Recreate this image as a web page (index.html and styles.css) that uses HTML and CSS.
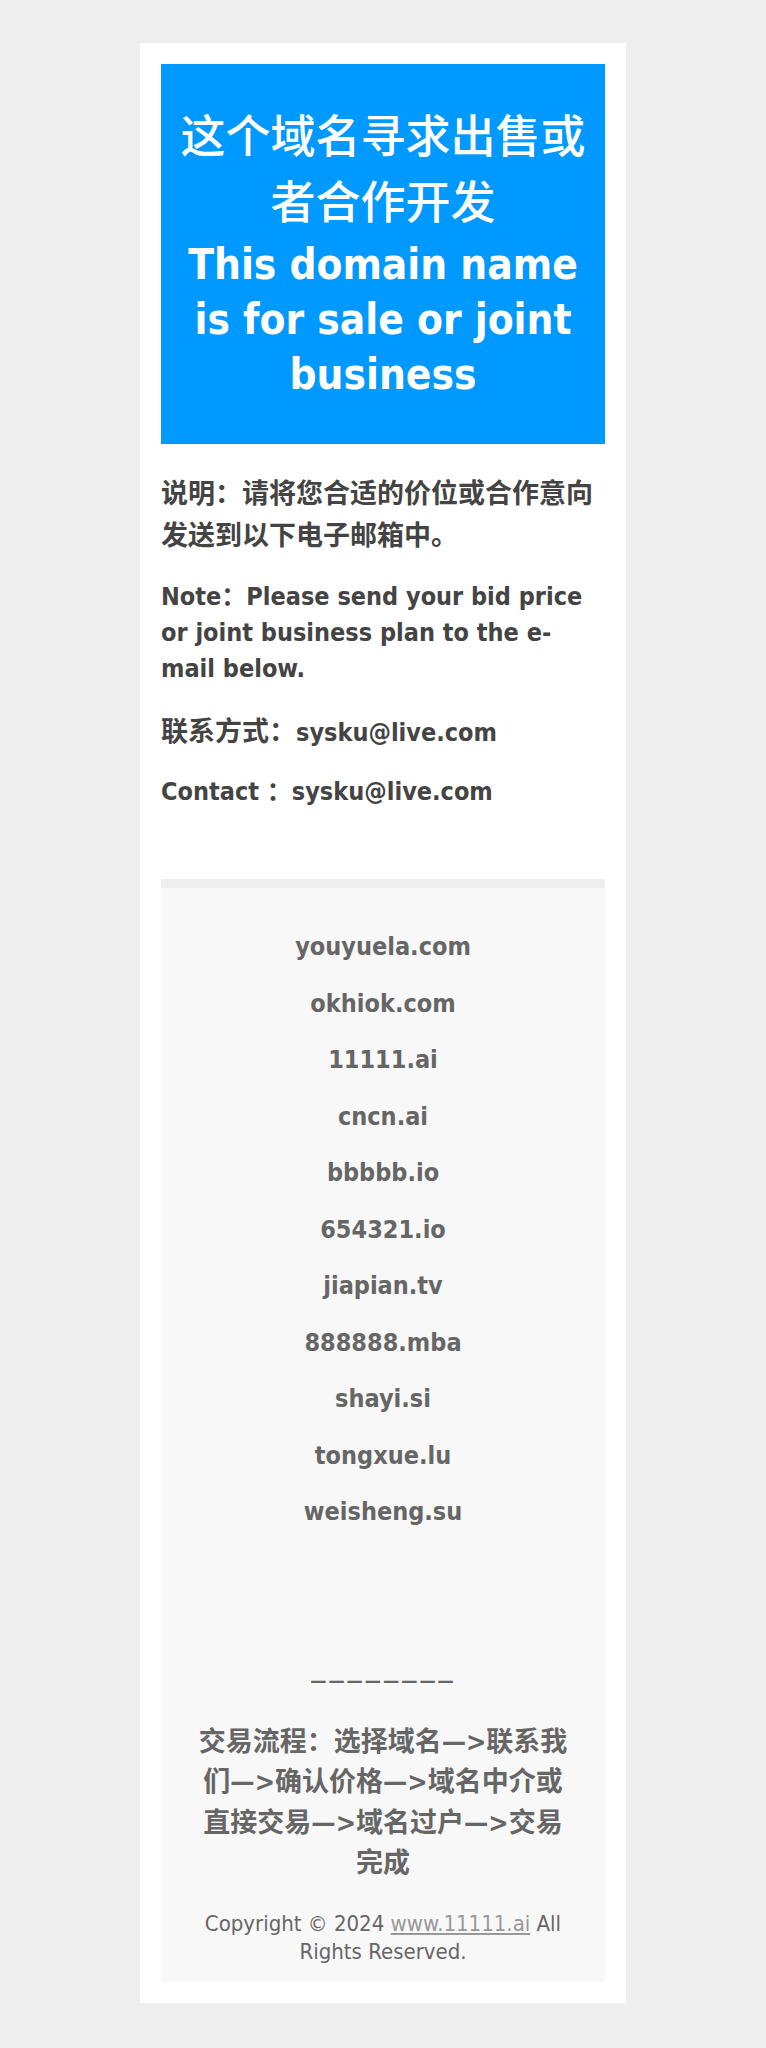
FILE: index.html
```html
<!DOCTYPE html>
<html lang="zh-CN">
<head>
  <meta charset="UTF-8" />
  <meta name="viewport" content="width=device-width, initial-scale=1.0"/>
  <title>这个域名寻求出售或者合作开发</title>
  <link rel="stylesheet" href="styles.css">
</head>
<body>
  <div class="container">
    <h1 class="banner">
      <span class="cn">这个域名寻求出售或者合作开发</span>
      <span class="en">This domain name is for sale or joint business</span>
    </h1>

    <p class="note-cn">说明：请将您合适的价位或合作意向发送到以下电子邮箱中。</p>
    <p class="note-en">Note：Please send your bid price or joint business plan to the e-mail below.</p>
    <p class="contact"><span class="cjk">联系方式：</span>sysku@live.com</p>
    <p class="contact-en">Contact ：sysku@live.com</p>

    <div class="domains">
      <ul class="domain-list">
        <li>youyuela.com</li>
        <li>okhiok.com</li>
        <li>11111.ai</li>
        <li>cncn.ai</li>
        <li>bbbbb.io</li>
        <li>654321.io</li>
        <li>jiapian.tv</li>
        <li>888888.mba</li>
        <li>shayi.si</li>
        <li>tongxue.lu</li>
        <li>weisheng.su</li>
      </ul>

      <div class="divider">————————</div>
      <p class="process">交易流程：选择域名—>联系我们—>确认价格—>域名中介或直接交易—>域名过户—>交易完成</p>
      <p class="copyright">Copyright © 2024 <a href="#">www.11111.ai</a> All<br>Rights Reserved.</p>
    </div>
  </div>
</body>
</html>
```

FILE: styles.css
```css
body {
  margin: 0; background: #eee; color: #444;
  font-family: "DejaVu Sans Condensed", "DejaVu Sans", "Noto Sans CJK SC", sans-serif;
  font-stretch: condensed;
}
.container {
  width: 444px; margin: 43px auto 44px; padding: 21px;
  background: #fff;
}
.banner {
  margin: 0; padding: 41px 18px 42px; background: #0099ff;
  color: #fff; text-align: center; font-weight: bold;
}
.banner .cn { display: block; font-size: 45px; line-height: 66px; font-weight: 500; }
.banner .en { display: block; font-size: 42px; line-height: 55px; }

.note-cn { margin: 29px 0 0; font-size: 27px; line-height: 42px; font-weight: bold; }
.note-en { margin: 22px 0 0; font-size: 25px; line-height: 36px; font-weight: bold; }
.contact { margin: 24px 0 0; font-size: 25px; line-height: 42px; font-weight: bold; }
.contact .cjk { font-size: 27px; }
.contact-en { margin: 20px 0 0; font-size: 25px; line-height: 36px; font-weight: bold; }

.domains {
  margin-top: 69px; padding: 31px 10px 16px;
  background: #f8f8f8; border-top: 9px solid #eee;
  color: #666; text-align: center;
}
.domain-list { list-style: none; margin: 0; padding: 0; }
.domain-list li { font-size: 25px; line-height: 56.5px; font-weight: bold; }

.divider {
  margin-top: 125px; font-size: 18px; line-height: 30px;
  letter-spacing: 2px; font-weight: bold; font-stretch: normal;
}
.process {
  max-width: 380px; margin: 26px auto 0;
  font-size: 27px; line-height: 40.5px; font-weight: bold;
}
.copyright { margin: 26px 0 0; font-size: 22px; line-height: 28px; }
.copyright a { color: #999; }
```
